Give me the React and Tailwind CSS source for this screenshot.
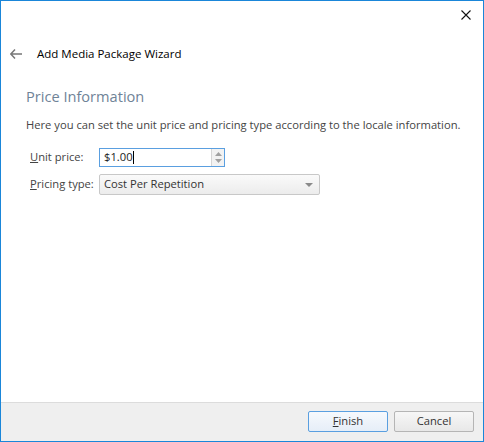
import React from "react";

const font = { fontFamily: '"Open Sans", "Noto Sans", sans-serif' };

const CloseIcon = () => (
  <svg width="10" height="10" viewBox="0 0 10 10">
    <path d="M0.5 0.5 L9.5 9.5 M9.5 0.5 L0.5 9.5" stroke="#111" strokeWidth="1.1" />
  </svg>
);

const BackArrow = () => (
  <svg width="12" height="10" viewBox="0 0 12 10">
    <path d="M5 0.5 L0.8 5 L5 9.5 M0.8 5 H12" stroke="#777" strokeWidth="1.5" fill="none" />
  </svg>
);

const Spinner = () => (
  <div className="flex flex-col items-center justify-center w-[13px] h-full border-l border-[#d5d5d5] bg-[#f2f2f2] gap-[3px]">
    <svg width="7" height="4" viewBox="0 0 7 4">
      <path d="M0 4 L3.5 0 L7 4 Z" fill="#a0a0a0" />
    </svg>
    <svg width="7" height="4" viewBox="0 0 7 4">
      <path d="M0 0 L3.5 4 L7 0 Z" fill="#a0a0a0" />
    </svg>
  </div>
);

export default function App() {
  return (
    <div
      className="w-[484px] h-[442px] border border-[#1a86d9] bg-white flex flex-col text-[#333] overflow-hidden"
      style={font}
    >
      <div className="h-[30px] flex justify-end items-start pt-[9px] pr-[12px]">
        <CloseIcon />
      </div>

      <div className="flex items-center h-[20px] mt-[13px]">
        <div className="w-[36px] pl-[9px] flex items-center">
          <BackArrow />
        </div>
        <span className="text-[11.5px] text-black">Add Media Package Wizard</span>
      </div>

      <div className="px-[25px] flex-1">
        <h1 className="text-[14.6px] text-[#6f8397] mt-[22px] leading-[20px]">Price Information</h1>

        <p className="text-[11.2px] text-[#444] mt-[11px] leading-[16px] whitespace-nowrap">
          Here you can set the unit price and pricing type according to the locale information.
        </p>

        <div className="mt-[15px] flex flex-col gap-[7px] pl-[4px]">
          <div className="flex items-center">
            <label className="w-[69px] text-[11.2px] text-[#444]">
              <span className="underline">U</span>nit price:
            </label>
            <div className="flex h-[19px] w-[126px] border border-[#5a9fe0] bg-white">
              <div className="flex-1 flex items-center pl-[4px] text-[11.2px] text-[#222]">
                $1.00<span className="w-px h-[13px] bg-black" />
              </div>
              <Spinner />
            </div>
          </div>

          <div className="flex items-center">
            <label className="w-[69px] text-[11.2px] text-[#444]">
              <span className="underline">P</span>ricing type:
            </label>
            <div className="flex items-center justify-between h-[21px] w-[221px] border border-[#c8c8c8] rounded-[2px] bg-gradient-to-b from-[#fafafa] to-[#ececec] pl-[4px] pr-[6px]">
              <span className="text-[11.2px] text-[#333]">Cost Per Repetition</span>
              <svg width="8" height="4" viewBox="0 0 8 4">
                <path d="M0 0 L4 4 L8 0 Z" fill="#8a8a8a" />
              </svg>
            </div>
          </div>
        </div>
      </div>

      <div className="h-[39px] border-t border-[#dcdcdc] bg-[#efefef] flex justify-end items-start pt-[8px] pr-[9px] gap-[6px]">
        <button className="w-[80px] h-[21px] border border-[#5a9fe0] rounded-[2px] bg-gradient-to-b from-[#f6f9fd] to-[#e6eef8] text-[11.2px] text-[#333]">
          <span className="underline">F</span>inish
        </button>
        <button className="w-[80px] h-[21px] border border-[#b5b5b5] rounded-[2px] bg-gradient-to-b from-[#f7f7f7] to-[#e8e8e8] text-[11.2px] text-[#333]">
          Cancel
        </button>
      </div>
    </div>
  );
}
